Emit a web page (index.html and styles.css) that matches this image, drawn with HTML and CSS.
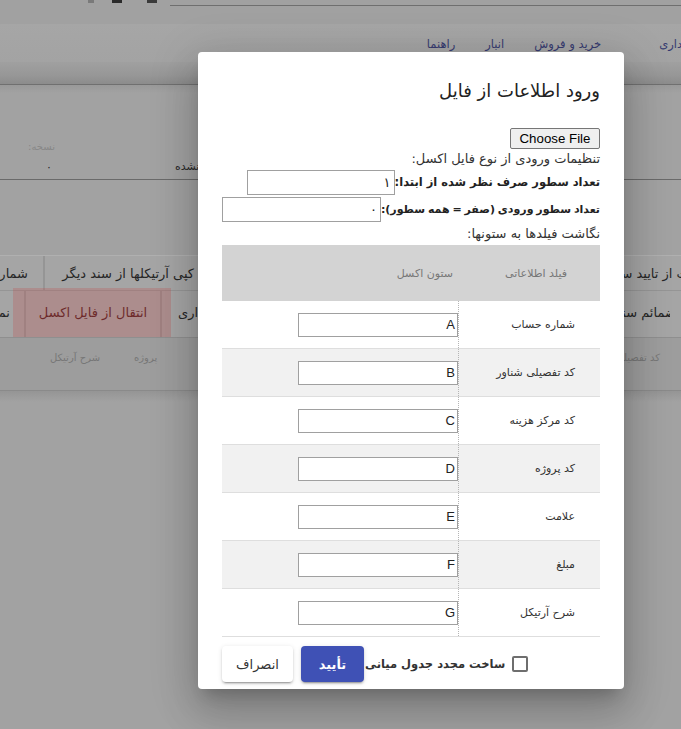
FILE: index.html
```html
<!DOCTYPE html>
<html lang="fa" dir="rtl">
<head>
<meta charset="utf-8">
<title>ورود اطلاعات از فایل</title>
<link rel="stylesheet" href="styles.css">
</head>
<body>
<div class="page">
  <header class="topbar">
    <div class="top-icons">
      <span class="ticon t1"></span>
      <span class="ticon t2"></span>
      <span class="ticon t3"></span>
    </div>
    <div class="topline"></div>
  </header>
  <nav class="menu">
    <span class="menu-item first">حسابداری</span>
    <span class="menu-item">خرید و فروش</span>
    <span class="menu-item">انبار</span>
    <span class="menu-item">راهنما</span>
  </nav>
  <div class="menu-shadow"></div>

  <section class="info">
    <div class="field field-version">
      <div class="field-label">نسخه:</div>
      <div class="field-value">۰</div>
    </div>
    <div class="field field-status">
      <div class="field-value">تایید نشده</div>
    </div>
  </section>

  <section class="toolbar">
    <div class="tool-row">
      <div class="tool-group left">
        <span class="tbtn b-num">شماره سند</span>
        <span class="tbtn b-copy">کپی آرتیکلها از سند دیگر</span>
      </div>
      <div class="tool-group right">
        <span class="tbtn b-back">بازگشت از تایید سند</span>
      </div>
    </div>
    <div class="tool-row">
      <div class="tool-group left">
        <span class="tbtn b-nm">نمایش</span>
        <span class="tbtn b-excel">انتقال از فایل اکسل</span>
        <span class="tbtn b-acc">حسابداری</span>
      </div>
      <div class="tool-group right">
        <span class="tbtn b-attach"><span class="clip-text">ضمائم سند</span></span>
      </div>
    </div>
    <div class="hl-box"></div>
  </section>

  <section class="grid-head">
    <div class="gh-left">
      <span class="gh-cell gh-desc">شرح آرتیکل</span>
      <span class="gh-cell gh-proj">پروژه</span>
    </div>
    <div class="gh-right">
      <span class="gh-cell gh-detail">کد تفصیلی</span>
    </div>
  </section>
  <div class="grid-shadow"></div>
</div>

<div class="dialog" role="dialog">
  <h2 class="dialog-title">ورود اطلاعات از فایل</h2>
  <div class="dialog-content">
    <div class="file-line"><span class="file-btn">Choose File</span></div>
    <div class="text-line">تنظیمات ورودی از نوع فایل اکسل:</div>
    <div class="form-line line-skip">
      <label class="bold-label">تعداد سطور صرف نظر شده از ابتدا:</label>
      <span class="num-input w148">۱</span>
    </div>
    <div class="form-line line-count">
      <label class="bold-label tight">تعداد سطور ورودی (صفر = همه سطور):</label>
      <span class="num-input w162">۰</span>
    </div>
    <div class="text-line map-line">نگاشت فیلدها به ستونها:</div>

    <div class="map-table">
      <div class="map-head">
        <div class="mh-field">فیلد اطلاعاتی</div>
        <div class="mh-col">ستون اکسل</div>
      </div>
      <div class="map-row">
        <div class="mr-field">شماره حساب</div>
        <div class="mr-col"><span class="col-input">A</span></div>
      </div>
      <div class="map-row alt">
        <div class="mr-field">کد تفصیلی شناور</div>
        <div class="mr-col"><span class="col-input">B</span></div>
      </div>
      <div class="map-row">
        <div class="mr-field">کد مرکز هزینه</div>
        <div class="mr-col"><span class="col-input">C</span></div>
      </div>
      <div class="map-row alt">
        <div class="mr-field">کد پروژه</div>
        <div class="mr-col"><span class="col-input">D</span></div>
      </div>
      <div class="map-row">
        <div class="mr-field">علامت</div>
        <div class="mr-col"><span class="col-input">E</span></div>
      </div>
      <div class="map-row alt">
        <div class="mr-field">مبلغ</div>
        <div class="mr-col"><span class="col-input">F</span></div>
      </div>
      <div class="map-row">
        <div class="mr-field">شرح آرتیکل</div>
        <div class="mr-col"><span class="col-input">G</span></div>
      </div>
    </div>
  </div>
  <div class="dialog-actions">
    <label class="check-wrap">
      <span class="check-box"></span>
      <span class="check-label">ساخت مجدد جدول میانی</span>
    </label>
    <button class="btn btn-primary" type="button">تأیید</button>
    <button class="btn btn-cancel" type="button">انصراف</button>
  </div>
</div>
</body>
</html>
```

FILE: styles.css
```css
* { box-sizing: border-box; }

html, body {
  margin: 0;
  padding: 0;
}

body {
  width: 681px;
  height: 729px;
  overflow: hidden;
  background: #a2a2a2;
  font-family: "DejaVu Sans", "Liberation Sans", sans-serif;
  position: relative;
}

/* ---------- background page (dimmed) ---------- */
.page {
  width: 681px;
  height: 729px;
  overflow: hidden;
}

.topbar {
  height: 24px;
  background: #a1a1a1;
  direction: ltr;
  display: flex;
  align-items: flex-start;
}

.top-icons {
  display: flex;
  padding-left: 88px;
  width: 170px;
}

.ticon {
  display: block;
  height: 3px;
}
.t1 { width: 6px; background: #7a7a7a; }
.t2 { width: 10px; margin-left: 18px; background: #2a2a2a; }
.t3 { width: 10px; margin-left: 25px; background: #3a3a3a; }

.topline {
  margin-top: 5px;
  flex: 1;
  height: 1px;
  background: #6f6f6f;
}

.menu {
  height: 38px;
  background: linear-gradient(#a6a6a6, #a3a3a3);
  display: flex;
  align-items: center;
  gap: 30px;
  padding-top: 2px;
  font-size: 11.5px;
  color: #363b70;
  white-space: nowrap;
}

.menu-item.first {
  margin-right: -26px;
  margin-left: 28px;
}

.menu-shadow {
  height: 23px;
  background: linear-gradient(#a0a0a0, #979797 60%, #8c8c8c);
  border-bottom: 1px solid #707070;
}

.info {
  height: 95px;
  background: linear-gradient(#999 0, #a2a2a2 8px);
  direction: ltr;
  display: flex;
  border-bottom: 1px solid #6a6a6a;
  font-size: 11px;
}

.field { direction: rtl; }

.field-version {
  padding-top: 55px;
  margin-left: 25px;
  width: 30px;
}

.field-label {
  color: #888;
  font-size: 10px;
  line-height: 14px;
}

.field-value {
  color: #2a2a2a;
  line-height: 14px;
}

.field-version .field-value {
  text-align: right;
  padding-right: 3px;
  margin-top: 7px;
}

.field-status {
  padding-top: 75px;
  margin-left: 120px;
  width: 200px;
  text-align: left;
}

.toolbar {
  margin-top: 75px;
  background: #a5a5a5;
  border-top: 1px solid #b0b0b0;
  position: relative;
}

.tool-row {
  height: 35px;
  direction: ltr;
  display: flex;
  justify-content: space-between;
  align-items: stretch;
  border-bottom: 1px solid #959595;
  font-size: 13px;
  color: #262626;
  overflow: hidden;
}

.tool-row + .tool-row { height: 46px; border-bottom: none; }

.tool-group {
  display: flex;
  align-items: stretch;
}

.tbtn {
  direction: rtl;
  display: flex;
  align-items: center;
  justify-content: center;
  white-space: nowrap;
  border-right: 2px solid #959595;
  padding: 0 12px;
  flex-shrink: 0;
}

.b-num { justify-content: flex-start; padding: 0 15px 0 0; margin-left: -40px; width: 85px; }
.b-copy { width: 170px; justify-content: flex-start; padding: 0 21px 0 0; border-right: none; }
.b-back { margin-right: -40px; padding: 0 0 0 10px; border: none; }

.tool-row + .tool-row .tbtn { padding-bottom: 4px; }

.b-nm { justify-content: flex-start; padding: 0 14px 0 0; margin-left: -16px; width: 42px; }
.b-excel { width: 136px; color: #4f1c1c; }
.b-acc { width: 60px; justify-content: flex-end; padding: 0 0 0 16px; border: none; }
.b-attach { width: 60px; margin-right: 11px; padding: 0; border: none; overflow: hidden; justify-content: flex-start; }
.clip-text { margin-right: -6px; }

.hl-box {
  position: absolute;
  left: 13px;
  top: 32px;
  width: 158px;
  height: 49px;
  background: rgba(190, 80, 80, 0.28);
  pointer-events: none;
}

.grid-head {
  height: 53px;
  direction: ltr;
  background: #9d9d9d;
  border-top: 1px solid #8f8f8f;
  display: flex;
  justify-content: space-between;
  font-size: 10px;
  color: #777;
  white-space: nowrap;
}

.gh-left {
  display: flex;
  padding-left: 50px;
  padding-top: 14px;
  gap: 34px;
}

.gh-cell { direction: rtl; }

.gh-right {
  padding-top: 14px;
  margin-right: 21px;
}

.grid-shadow {
  height: 12px;
  border-top: 1px solid #8a8a8a;
  background: linear-gradient(#959595, #a2a2a2);
}

/* ---------- dialog ---------- */
.dialog {
  position: absolute;
  left: 198px;
  top: 52px;
  width: 426px;
  height: 637px;
  background: #fff;
  border-radius: 4px;
  direction: rtl;
  display: flex;
  flex-direction: column;
  box-shadow: 0 11px 15px -7px rgba(0,0,0,0.2),
              0 24px 38px 3px rgba(0,0,0,0.14),
              0 9px 46px 8px rgba(0,0,0,0.12);
}

.dialog-title {
  margin: 0;
  padding: 23px 24px 0;
  height: 72px;
  font-size: 18px;
  font-weight: normal;
  line-height: 32px;
  color: #222;
  flex-shrink: 0;
}

.dialog-content {
  padding: 0 24px;
  flex: 1;
  font-size: 13px;
  color: #222;
}

.file-line {
  height: 25px;
  padding-top: 4px;
}

.file-btn {
  display: inline-block;
  direction: ltr;
  font-family: "Liberation Sans", Arial, sans-serif;
  font-size: 13.3px;
  line-height: 19px;
  height: 21px;
  width: 90px;
  text-align: center;
  background: #efefef;
  border: 1px solid #767676;
  border-radius: 2px;
  color: #000;
}

.text-line {
  height: 20px;
  line-height: 20px;
  color: #333;
}

.form-line {
  display: flex;
  align-items: center;
  height: 28px;
}

.line-skip { height: 26px; }

.bold-label {
  font-weight: bold;
  font-size: 11.5px;
  color: #222;
  white-space: nowrap;
}

.bold-label.tight { font-size: 11px; word-spacing: -1px; }

.num-input {
  display: inline-block;
  height: 25px;
  border: 1px solid #a0a0a0;
  line-height: 23px;
  padding: 0 3px;
  font-size: 13px;
  color: #222;
  text-align: right;
}

.w148 { width: 148px; }
.w162 { width: 162px; }

.map-line { height: 22px; line-height: 22px; }

.map-table { width: 378px; }

.map-head {
  display: flex;
  height: 56px;
  background: #d3d3d3;
  align-items: center;
  font-size: 11px;
  color: #777;
}

.mh-field {
  width: 142px;
  padding-right: 33px;
}

.mh-col {
  flex: 1;
  padding-right: 5px;
}

.map-row {
  display: flex;
  height: 48px;
  border-bottom: 1px solid #dedede;
  font-size: 11px;
  color: #333;
}

.map-row.alt { background: #f1f1f1; }

.mr-field {
  width: 142px;
  padding-right: 25px;
  display: flex;
  align-items: center;
  border-left: 1px dotted #b5b5b5;
}

.mr-col {
  flex: 1;
  display: flex;
  align-items: center;
}

.col-input {
  display: block;
  width: 160px;
  height: 24px;
  border: 1px solid #a0a0a0;
  background: #fff;
  font-family: "Liberation Sans", Arial, sans-serif;
  font-size: 13px;
  line-height: 22px;
  padding: 0 2px;
  color: #222;
  text-align: right;
}

.dialog-actions {
  height: 52px;
  flex-shrink: 0;
  display: flex;
  align-items: center;
  justify-content: flex-end;
  padding: 2px 24px 0;
  gap: 8px;
}

.check-wrap {
  display: flex;
  align-items: center;
  gap: 7px;
  margin-left: -7px;
}

.check-box {
  width: 16px;
  height: 16px;
  border: 2px solid #6e6e6e;
  border-radius: 2px;
}

.check-label {
  font-size: 11.5px;
  font-weight: bold;
  color: #333;
}

.btn {
  font-family: "DejaVu Sans", "Roboto", sans-serif;
  height: 36px;
  border: none;
  border-radius: 4px;
  font-size: 13px;
  padding: 0;
  cursor: pointer;
}

.btn-primary {
  width: 63px;
  background: #3f51b5;
  color: #fff;
  font-weight: bold;
  box-shadow: 0 3px 1px -2px rgba(0,0,0,0.2), 0 2px 2px 0 rgba(0,0,0,0.14), 0 1px 5px 0 rgba(0,0,0,0.12);
}

.btn-cancel {
  width: 71px;
  background: #fff;
  color: #333;
  box-shadow: 0 3px 1px -2px rgba(0,0,0,0.2), 0 2px 2px 0 rgba(0,0,0,0.14), 0 1px 5px 0 rgba(0,0,0,0.12);
}
```
